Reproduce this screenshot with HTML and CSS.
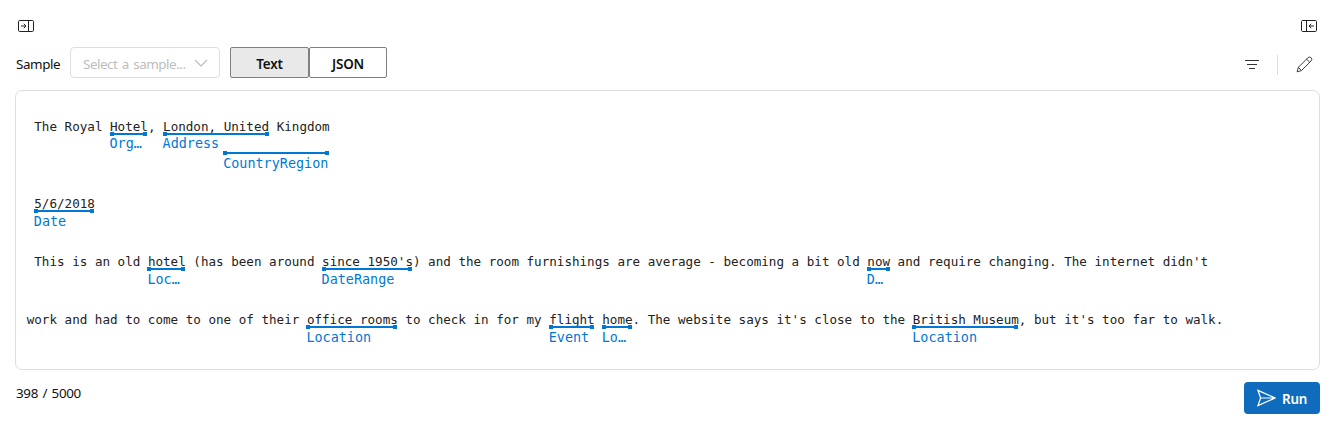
FILE: index.html
```html
<!DOCTYPE html>
<html lang="en">
<head>
<meta charset="utf-8">
<title>Text analysis sample</title>
<link rel="stylesheet" href="styles.css">
</head>
<body>
<div class="panel-bar">
  <svg class="panel-icon" viewBox="0 0 16 12"><rect x=".5" y=".5" width="15" height="11" rx="1.2"/><path d="M10.5 .5v11M3 6h5M5.8 3.8L8 6 5.8 8.2"/></svg>
  <svg class="panel-icon" viewBox="0 0 16 12"><rect x=".5" y=".5" width="15" height="11" rx="1.2"/><path d="M5.5 .5v11M13 6H8M10.2 3.8L8 6l2.2 2.2"/></svg>
</div>
<div class="toolbar">
  <span class="sample-label">Sample</span>
  <div class="select"><span class="placeholder">Select a sample...</span><svg class="chevron" viewBox="0 0 14 8"><path d="M1 1l6 6 6-6"/></svg></div>
  <div class="tabs"><button class="tab tab-active">Text</button><button class="tab">JSON</button></div>
  <div class="actions">
    <svg class="filter" viewBox="0 0 14 10"><path d="M0 .5h14M2 4.5h10M4 8.5h6"/></svg>
    <span class="divider"></span>
    <svg class="pencil" viewBox="0 0 18 18"><path d="M1.2 16.8L2.5 12 12.6 1.9a2.3 2.3 0 0 1 3.4 3.3L5.8 15.4zM11.2 3.3l3.4 3.4M2.5 12l3.3 3.4"/></svg>
  </div>
</div>
<div class="document">
  <p class="line line-first">The Royal <span class="entity">Hotel<span class="mark"><span class="tag">Org…</span></span></span>, <span class="entity">London, <span class="entity">United<span class="mark mark-low"><span class="tag tag-down">CountryRegion</span></span></span><span class="mark"><span class="tag">Address</span></span></span> Kingdom</p>
  <p class="line"><span class="entity">5/6/2018<span class="mark"><span class="tag tag-down">Date</span></span></span></p>
  <p class="line">This is an old <span class="entity">hotel<span class="mark"><span class="tag tag-down">Loc…</span></span></span> (has been around <span class="entity">since 1950's<span class="mark"><span class="tag tag-down">DateRange</span></span></span>) and the room furnishings are average - becoming a bit old <span class="entity">now<span class="mark"><span class="tag tag-down">D…</span></span></span> and require changing. The internet didn't</p>
  <p class="line line-wrapped">work and had to come to one of their <span class="entity">office rooms<span class="mark"><span class="tag tag-down">Location</span></span></span> to check in for my <span class="entity">flight<span class="mark"><span class="tag tag-down">Event</span></span></span> <span class="entity">home<span class="mark"><span class="tag tag-down">Lo…</span></span></span>. The website says it's close to the <span class="entity">British Museum<span class="mark"><span class="tag tag-down">Location</span></span></span>, but it's too far to walk.</p>
</div>
<div class="footer">
  <span class="count">398 / 5000</span>
  <button class="run"><svg class="send" viewBox="0 0 20 18"><path d="M1 1l18 8L1 17l2.8-8zM3.8 9H19"/></svg><span class="run-text">Run</span></button>
</div>
</body>
</html>
```
FILE: styles.css
```css
* { box-sizing: border-box; }
body { margin: 0; padding: 20px 15px 0; width: 1335px; height: 445px; overflow: hidden; background: #fff; color: #111; font-family: "Noto Sans", "Open Sans", sans-serif; font-size: 13.4px; }
svg { fill: none; stroke: #333; flex: none; display: block; }
button { font: inherit; margin: 0; padding: 0; }
.panel-bar { display: flex; justify-content: space-between; padding: 0 3px; height: 27px; }
.panel-icon { width: 16px; height: 12px; stroke: #222; }
.toolbar { display: flex; height: 31px; align-items: center; }
.sample-label { width: 55px; padding-left: 1px; padding-top: 3px; letter-spacing: -.4px; }
.select { width: 150px; height: 31px; border: 1px solid #dedede; border-radius: 4px; display: flex; align-items: center; justify-content: space-between; padding: 0 11px 0 12px; color: #bdbdbd; white-space: nowrap; }
.placeholder { padding-top: 3px; letter-spacing: -.45px; word-spacing: 1.3px; }
.chevron { width: 14px; height: 8px; stroke: #bdbdbd; stroke-width: 1.2; }
.tabs { display: flex; margin-left: 10px; }
.tab { width: 78px; height: 31px; border: 1px solid #808080; border-radius: 2px; background: #fff; font-weight: 600; color: #111; padding-top: 3px; letter-spacing: -.2px; }
.tab-active { width: 79px; background: #e9e9e9; }
.actions { display: flex; align-items: center; margin-left: auto; padding: 4px 7px 0 0; }
.filter { width: 14px; height: 10px; }
.divider { width: 1px; height: 20px; background: #ddd; margin: 0 18px; }
.pencil { width: 17px; height: 17px; }
.document { margin-top: 12px; height: 280px; width: 1305px; border: 1px solid #dedede; border-radius: 7px; padding: 26px 0 0 18.3px; font: 12.58px/20px "DejaVu Sans Mono", monospace; color: #222; }
.line { margin: 0; height: 58px; white-space: pre; }
.line-first { height: 77px; }
.line-wrapped { margin-left: -7.6px; }
.entity { position: relative; display: inline-block; }
.mark { position: absolute; left: -.5px; right: .5px; top: 16px; height: 2px; background: #0078d4; }
.mark::before, .mark::after { content: ""; position: absolute; top: -1px; width: 4px; height: 4px; background: #0078d4; }
.mark::before { left: 0; }
.mark::after { right: 0; }
.mark-low { top: 35px; right: auto; width: 106px; }
.tag { position: absolute; left: 0; top: 1px; font-size: 13.45px; line-height: 20px; color: #0078d4; }
.tag-down { top: 2px; }
.footer { display: flex; justify-content: space-between; padding-top: 12px; }
.count { padding-left: 1px; padding-top: 2px; letter-spacing: -.3px; word-spacing: 1.2px; }
.run { width: 76px; height: 32px; border: 0; border-radius: 4px; background: #0f6cbd; color: #fff; font-weight: 600; display: flex; align-items: center; padding-left: 13px; gap: 6px; }
.send { width: 19px; height: 18px; stroke: #fff; stroke-width: 1.3; }
.run-text { padding-top: 2px; letter-spacing: -.2px; }
```
